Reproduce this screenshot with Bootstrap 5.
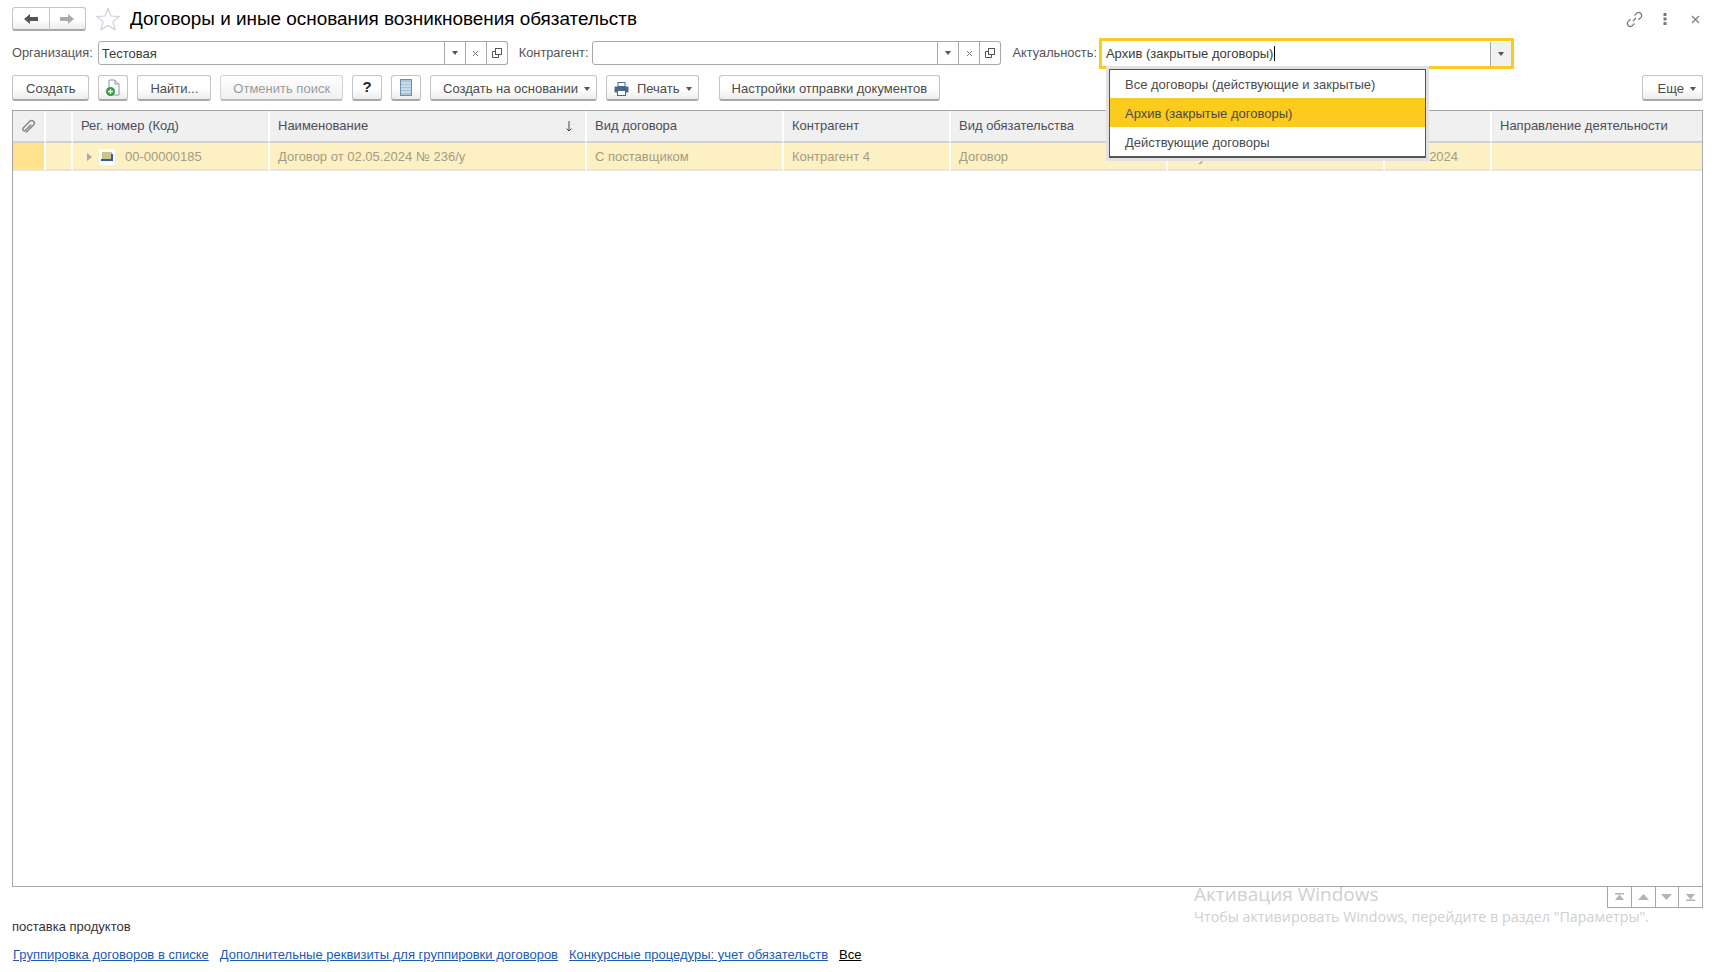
<!DOCTYPE html>
<html lang="ru">
<head>
  <meta charset="UTF-8" />
  <title>Договоры и иные основания возникновения обязательств</title>
  <link href="https://cdn.jsdelivr.net/npm/bootstrap@5.3.3/dist/css/bootstrap.min.css" rel="stylesheet">
  <style>
    html, body { height: 100%; }
    body {
      background: #fff; color: #4a4a4a; overflow: hidden;
      font-family: "Liberation Sans", Arial, sans-serif; font-size: 13px;
    }
    .page-wrap { height: 972px; padding: 7px 19px 0 12px; position: relative; }

    .title-row { height: 24px; }
    .title-text { font-size: 18.9px; color: #000; margin: 0 0 0 10px; font-weight: 400; line-height: 24px; }
    .star-ico { margin-left: 10px; }

    .sk-btn {
      --bs-btn-padding-x: 12px; --bs-btn-padding-y: 0; --bs-btn-font-size: 13px;
      --bs-btn-color: #4a4a4a; --bs-btn-border-radius: 3px;
      height: 26px; display: inline-flex; align-items: center; justify-content: center;
      background: linear-gradient(#fff 0%, #fff 55%, #ececec 100%);
      border: 1px solid #c4c4c4; border-bottom: 2px solid #a8a8a8;
      white-space: nowrap; padding-top: 2px;
    }
    .sk-btn.off { color: #9b9b9b; border-color: #d4d4d4; border-bottom-color: #bcbcbc; opacity: 1; background: linear-gradient(#fff, #f0f0f0); }
    .btn-ico { width: 30px; padding: 0; }
    .btn-first { padding-left: 13px; padding-right: 13px; }
    .dd-caret { width: 0; height: 0; border: 3px solid transparent; border-top: 4px solid #555; border-bottom: 0; margin-left: 6px; }
    .has-caret { padding-right: 6px; }
    .print-btn { padding-left: 7px; }
    .more-btn { padding-left: 15px; }

    .back-group { width: 74px; height: 24px; }
    .back-group .sk-btn { height: 24px; width: 37px; padding: 0; }

    .filter-row { height: 24px; margin-top: 10px; }
    .filter-lbl { color: #555; font-size: 12.8px; margin-right: 5px; white-space: nowrap; }
    .lbl-next { margin-left: 11px; margin-right: 4px; }
    .lbl-last { margin-right: 2px; }
    .sk-input { height: 24px; }
    .sk-input .form-control {
      height: 24px; min-height: 0; padding: 0 3px; font-size: 13px; color: #3a3a3a;
      border-color: #a8a8a8; border-radius: 3px 0 0 3px; box-shadow: none;
      font-family: inherit;
    }
    .field-btn {
      width: 21px; padding: 0; display: flex; align-items: center; justify-content: center;
      border: 1px solid #a8a8a8; border-left: 0; background: #fff; margin: 0 !important;
    }
    .field-btn:last-child { border-radius: 0 3px 3px 0; }
    .org-field { width: 410px; }
    .ctr-field { width: 409px; }
    .focus-field {
      width: 415px; height: 31px; margin-top: -3px; margin-bottom: -4px; flex-shrink: 0;
      border: 3px solid #fbcb1e; padding-left: 4px; color: #3a3a3a;
    }
    .focus-caret { width: 1px; height: 15px; background: #000; margin-left: 1px; }
    .focus-btn {
      width: 21px; height: 24px; margin-left: auto; border-left: 1px solid #a8a8a8;
      background: #f1f1f1;
    }

    .tool-row { margin-top: 10px; height: 26px; }
    .tool-row .sk-btn { margin-right: 9px; }
    .tool-row .gap-wide { margin-left: 11px; }
    .tool-row .sk-btn:last-child { margin-right: 0; }
    .tool-q { color: #222; font-size: 15px; font-weight: 700; }

    .grid-frame { margin-top: 9px; height: 777px; border: 1px solid #a6a6a6; }
    .grid-table { table-layout: fixed; width: 1689px; border-collapse: separate; border-spacing: 0; }
    .grid-table th {
      height: 32px; background: #f0f0f0; font-weight: 400; color: #4d4d5a; padding: 0 8px;
      border-right: 2px solid #fff; border-bottom: 2px solid #d0d0d0; white-space: nowrap;
    }
    .grid-table td {
      height: 28px; background: #fdf0c3; color: #a49c84; padding: 1px 8px 0;
      border-right: 2px solid #fff; border-bottom: 2px solid #e4e4e4; white-space: nowrap;
    }
    .grid-table th:last-child, .grid-table td:last-child { border-right: 0; }
    .grid-table td.mark-cell { background: #fee38c; }
    .grid-table td.date-cell { text-align: right; padding-right: 35px; }
    .sort-ico { margin-right: 4px; }
    .row-tri { width: 0; height: 0; border: 4px solid transparent; border-left: 5px solid #a8a8a8; border-right: 0; margin-left: 14px; margin-right: 7px; }
    .row-ico { width: 16px; height: 16px; background: #fff; margin-right: 10px; }

    .pager { height: 21px; width: 96px; margin-left: auto; margin-top: 0; border: 1px solid #a6a6a6; border-top: 0; }
    .pager span { flex: 1; display: flex; align-items: center; justify-content: center; border-right: 1px solid #a6a6a6; }
    .pager span:last-child { border-right: 0; }

    .note-row { margin-top: 11px; color: #333; line-height: 16px; }
    .links-row { margin-top: 12px; line-height: 16px; gap: 11px; padding-left: 1px; }
    .links-row a { color: #1a5bb8; }
    .links-row a.all-link { color: #000; }

    .drop-list {
      position: absolute; left: 1106px; top: 66px; width: 323px; height: 95px;
      border: 3px solid #e2e2e2; z-index: 5; background: #555;
      padding: 1px;
    }
    .drop-list .list-group { border-radius: 0; height: 100%; }
    .drop-list .list-group-item {
      height: 29px; padding: 2px 0 0 15px; border: 0; border-radius: 0; font-size: 13px; margin: 0;
      color: #4a4a4a; display: flex; align-items: center; background: #fff;
    }
    .drop-list .list-group-item:first-child { padding-top: 0; }
    .drop-list .list-group-item.active { background: #fbcb1e; color: #4a4a4a; }

    .win-mark { position: absolute; left: 1194px; top: 882px; color: #cfcfcf; font-family: "Open Sans", sans-serif; pointer-events: none; }
    .win-head { font-size: 19px; line-height: 24px; }
    .win-sub { font-size: 14.3px; line-height: 18px; margin-top: 2px; white-space: nowrap; }

    .top-icons { margin-left: auto; gap: 20px; padding-right: 3px; }
  </style>
</head>
<body>
<div class="page-wrap">

  <div class="title-row d-flex align-items-center">
    <div class="back-group btn-group">
      <button class="btn sk-btn" type="button">
        <svg width="16" height="12" viewBox="0 0 16 12"><path d="M1 6 L7 1 V4 H15 V8 H7 V11 Z" fill="#555"/></svg>
      </button>
      <button class="btn sk-btn" type="button">
        <svg width="16" height="12" viewBox="0 0 16 12"><path d="M15 6 L9 1 V4 H1 V8 H9 V11 Z" fill="#aaa"/></svg>
      </button>
    </div>
    <svg class="star-ico" width="24" height="24" viewBox="0 0 24 24"><path d="M12 1.5 L15 9 L23 9.5 L17 14.8 L19 22.8 L12 18.5 L5 22.8 L7 14.8 L1 9.5 L9 9 Z" fill="#fff" stroke="#c6ced6" stroke-width="1.1"/></svg>
    <h1 class="title-text">Договоры и иные основания возникновения обязательств</h1>
    <div class="top-icons d-flex align-items-center">
      <svg width="17" height="17" viewBox="0 0 17 17" fill="none" stroke="#777" stroke-width="1.2"><path d="M7 10 L10 7"/><path d="M8.5 4.5 L10.8 2.2 a3 3 0 0 1 4.2 4.2 L12.5 8.8"/><path d="M8.5 12.5 L6.2 14.8 a3 3 0 0 1 -4.2 -4.2 L4.5 8.2"/></svg>
      <svg width="4" height="12" viewBox="0 0 4 12" fill="#777"><rect x="0.5" y="0" width="3" height="3"/><rect x="0.5" y="4.5" width="3" height="3"/><rect x="0.5" y="9" width="3" height="3"/></svg>
      <svg class="ms-1" width="9" height="9" viewBox="0 0 9 9" stroke="#777" stroke-width="1.1"><path d="M1 1 L8 8 M8 1 L1 8"/></svg>
    </div>
  </div>

  <div class="filter-row d-flex align-items-center">
    <span class="filter-lbl">Организация:</span>
    <div class="input-group sk-input org-field flex-nowrap">
      <input class="form-control" type="text" value="Тестовая">
      <span class="field-btn"><span class="dd-caret ms-0"></span></span>
      <span class="field-btn"><svg width="7" height="7" viewBox="0 0 7 7" stroke="#777"><path d="M1 1 L6 6 M6 1 L1 6"/></svg></span>
      <span class="field-btn"><svg width="10" height="10" viewBox="0 0 10 10" fill="none" stroke="#555"><rect x="3.5" y="0.5" width="6" height="6"/><path d="M3.5 3.5 H0.5 V9.5 H6.5 V6.5"/></svg></span>
    </div>
    <span class="filter-lbl lbl-next">Контрагент:</span>
    <div class="input-group sk-input ctr-field flex-nowrap">
      <input class="form-control" type="text" value="">
      <span class="field-btn"><span class="dd-caret ms-0"></span></span>
      <span class="field-btn"><svg width="7" height="7" viewBox="0 0 7 7" stroke="#777"><path d="M1 1 L6 6 M6 1 L1 6"/></svg></span>
      <span class="field-btn"><svg width="10" height="10" viewBox="0 0 10 10" fill="none" stroke="#555"><rect x="3.5" y="0.5" width="6" height="6"/><path d="M3.5 3.5 H0.5 V9.5 H6.5 V6.5"/></svg></span>
    </div>
    <span class="filter-lbl lbl-next lbl-last">Актуальность:</span>
    <div class="focus-field d-flex align-items-center">
      <span>Архив (закрытые договоры)</span><span class="focus-caret"></span>
      <span class="focus-btn d-flex align-items-center justify-content-center"><span class="dd-caret ms-0"></span></span>
    </div>
  </div>

  <div class="tool-row d-flex align-items-center">
    <button class="btn sk-btn btn-first" type="button">Создать</button>
    <button class="btn sk-btn btn-ico" type="button">
      <svg width="16" height="18" viewBox="0 0 16 18"><path d="M4 1 H10 L14 5 V16 H4 Z" fill="#fff" stroke="#8a97a3"/><path d="M10 1 V5 H14" fill="#dfe6ec" stroke="#8a97a3"/><circle cx="5.5" cy="12.5" r="4.5" fill="#2f9e3f"/><path d="M5.5 10 V15 M3 12.5 H8" stroke="#fff" stroke-width="1.4"/></svg>
    </button>
    <button class="btn sk-btn" type="button">Найти...</button>
    <button class="btn sk-btn off" type="button">Отменить поиск</button>
    <button class="btn sk-btn btn-ico tool-q" type="button">?</button>
    <button class="btn sk-btn btn-ico" type="button">
      <svg width="12" height="17" viewBox="0 0 12 17"><rect x="0.5" y="0.5" width="11" height="16" fill="#a9c4dc" stroke="#6d8fae"/><path d="M1 4 H11 M1 7 H11 M1 10 H11 M1 13 H11" stroke="#e8f0f6" stroke-width="1"/></svg>
    </button>
    <button class="btn sk-btn has-caret" type="button">Создать на основании<span class="dd-caret"></span></button>
    <button class="btn sk-btn has-caret print-btn" type="button">
      <svg class="me-2" width="15" height="14" viewBox="0 0 15 14"><rect x="4" y="0.5" width="7" height="4" fill="#fff" stroke="#47698c"/><rect x="0.5" y="4.5" width="14" height="6" rx="1" fill="#47698c"/><rect x="3.5" y="8.5" width="8" height="5" fill="#fff" stroke="#47698c"/></svg>Печать<span class="dd-caret"></span>
    </button>
    <button class="btn sk-btn gap-wide" type="button">Настройки отправки документов</button>
    <button class="btn sk-btn has-caret more-btn ms-auto" type="button">Еще<span class="dd-caret"></span></button>
  </div>

  <div class="grid-frame">
    <table class="grid-table">
      <colgroup>
        <col width="33"><col width="27"><col width="197"><col width="317"><col width="197"><col width="167"><col width="217"><col width="217"><col width="107"><col width="210">
      </colgroup>
      <thead>
        <tr>
          <th class="text-center p-0">
            <svg width="15" height="16" viewBox="0 0 15 16" fill="none" stroke="#888" stroke-width="1.5"><path d="M5 13.5 L12.5 6 a2.6 2.6 0 0 0 -3.7 -3.7 L2.2 9 a1.6 1.6 0 0 0 2.3 2.3 L10.2 5.6"/></svg>
          </th>
          <th></th>
          <th>Рег. номер (Код)</th>
          <th>
            <div class="d-flex justify-content-between align-items-center">
              <span>Наименование</span>
              <svg class="sort-ico" width="8" height="11" viewBox="0 0 8 11" fill="none" stroke="#444"><path d="M4 0 V10 M1.5 7.5 L4 10 L6.5 7.5"/></svg>
            </div>
          </th>
          <th>Вид договора</th>
          <th>Контрагент</th>
          <th>Вид обязательства</th>
          <th></th>
          <th></th>
          <th>Направление деятельности</th>
        </tr>
      </thead>
      <tbody>
        <tr>
          <td class="mark-cell"></td>
          <td></td>
          <td class="ps-0">
            <div class="d-flex align-items-center">
              <span class="row-tri"></span>
              <span class="row-ico d-flex align-items-center justify-content-center">
                <svg width="12" height="9" viewBox="0 0 12 9"><rect x="1" y="0" width="10" height="7" fill="#c9c48c"/><rect x="0" y="7" width="12" height="2" fill="#3a55b0"/><rect x="10" y="2" width="2" height="5" fill="#3a55b0"/></svg>
              </span>
              <span>00-00000185</span>
            </div>
          </td>
          <td>Договор от 02.05.2024 № 236/у</td>
          <td>С поставщиком</td>
          <td>Контрагент 4</td>
          <td>Договор</td>
          <td>Покупка</td>
          <td class="date-cell">02.05.2024</td>
          <td></td>
        </tr>
      </tbody>
    </table>
  </div>

  <div class="pager d-flex">
    <span><svg width="11" height="8" viewBox="0 0 11 8" fill="#b4b4b4"><rect x="1" y="0" width="9" height="1.5"/><path d="M5.5 1.5 L10 7 H1 Z"/></svg></span>
    <span><svg width="11" height="6" viewBox="0 0 11 6" fill="#b4b4b4"><path d="M5.5 0 L11 6 H0 Z"/></svg></span>
    <span><svg width="11" height="6" viewBox="0 0 11 6" fill="#b4b4b4"><path d="M5.5 6 L11 0 H0 Z"/></svg></span>
    <span><svg width="11" height="8" viewBox="0 0 11 8" fill="#b4b4b4"><path d="M5.5 6.5 L10 1 H1 Z"/><rect x="1" y="6.5" width="9" height="1.5"/></svg></span>
  </div>

  <div class="note-row">поставка продуктов</div>
  <div class="links-row d-flex">
    <a href="#">Группировка договоров в списке</a>
    <a href="#">Дополнительные реквизиты для группировки договоров</a>
    <a href="#">Конкурсные процедуры: учет обязательств</a>
    <a href="#" class="all-link">Все</a>
  </div>

  <div class="drop-list">
    <div class="list-group">
      <div class="list-group-item">Все договоры (действующие и закрытые)</div>
      <div class="list-group-item active">Архив (закрытые договоры)</div>
      <div class="list-group-item">Действующие договоры</div>
    </div>
  </div>

  <div class="win-mark">
    <div class="win-head">Активация Windows</div>
    <div class="win-sub">Чтобы активировать Windows, перейдите в раздел "Параметры".</div>
  </div>
</div>
<script src="https://cdn.jsdelivr.net/npm/bootstrap@5.3.3/dist/js/bootstrap.bundle.min.js"></script>
</body>
</html>
